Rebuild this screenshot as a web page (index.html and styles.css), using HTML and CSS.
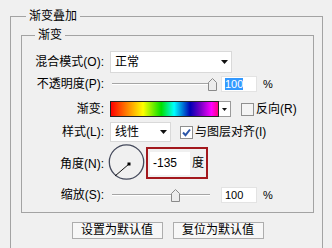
FILE: index.html
```html
<!DOCTYPE html>
<html lang="zh-CN">
<head>
<meta charset="utf-8">
<title>渐变叠加</title>
<link rel="stylesheet" href="styles.css">
</head>
<body>
<fieldset class="group outer">
  <legend>渐变叠加</legend>
  <fieldset class="group inner">
    <legend>渐变</legend>

    <div class="row r1">
      <span class="lbl">混合模式(O):</span>
      <div class="select mode"><span>正常</span><svg class="arrow" width="7" height="4"><polygon points="0,0 7,0 3.5,4"/></svg></div>
    </div>

    <div class="row r2">
      <span class="lbl">不透明度(P):</span>
      <div class="slider"><div class="track"></div><svg class="thumb" style="left:98px" width="9" height="13"><polygon points="0.5,12.5 0.5,4.5 4.5,0.5 8.5,4.5 8.5,12.5"/></svg></div>
      <div class="num"><span class="sel">100</span></div>
      <span class="unit">%</span>
    </div>

    <div class="row r3">
      <span class="lbl">渐变:</span>
      <div class="grad"></div>
      <div class="gbtn"><svg width="5" height="3"><polygon points="0,0 5,0 2.5,3"/></svg></div>
      <label class="check rev">
        <svg width="13" height="13"><rect x="0.5" y="0.5" width="12" height="12" class="box"/></svg>
        <span>反向(R)</span>
      </label>
    </div>

    <div class="row r4">
      <span class="lbl">样式(L):</span>
      <div class="select style"><span>线性</span><svg class="arrow" width="7" height="4"><polygon points="0,0 7,0 3.5,4"/></svg></div>
      <label class="check align">
        <svg width="13" height="13"><rect x="0.5" y="0.5" width="12" height="12" class="box on"/><path d="M3 6.5 L5.5 9.2 L10 3.5" class="tick"/></svg>
        <span>与图层对齐(I)</span>
      </label>
    </div>

    <div class="row r5">
      <span class="lbl">角度(N):</span>
      <svg class="dial" width="37" height="38">
        <circle cx="18.5" cy="19" r="17.2"/>
        <line x1="21" y1="21" x2="7" y2="33"/>
        <rect x="19.5" y="19.5" width="3" height="3"/>
      </svg>
      <div class="hilite">
        <div class="angle">-135</div>
        <span>度</span>
      </div>
    </div>

    <div class="row r6">
      <span class="lbl">缩放(S):</span>
      <div class="slider"><div class="track"></div><svg class="thumb" style="left:61px" width="9" height="13"><polygon points="0.5,12.5 0.5,4.5 4.5,0.5 8.5,4.5 8.5,12.5"/></svg></div>
      <div class="num">100</div>
      <span class="unit">%</span>
    </div>
  </fieldset>

  <div class="btns">
    <button class="btn">设置为默认值</button>
    <button class="btn">复位为默认值</button>
  </div>
</fieldset>
</body>
</html>
```

FILE: styles.css
```css
html,body{margin:0;overflow:hidden}
body{width:332px;height:248px;background:#f0f0f0;color:#000;font:12px/16px "Liberation Sans","Noto Sans CJK SC",sans-serif}

.group{border:1px solid #a3a3a3;margin:0;min-width:0}
.group>legend{padding:0 3px;line-height:16px}
.outer{margin:8px 9px 0 10px;padding:3px 8px 60px 10px}
.outer>legend{margin-left:5px}
.inner{padding:8px 0 9px 0}
.inner>legend{margin-left:13px}

.row{display:flex;align-items:center}
.lbl{width:82px;margin-right:6px;text-align:right;flex:none;white-space:nowrap}
.r1{height:22px}
.r2{height:16px;margin-top:3px}
.r3{height:16px;margin-top:9px}
.r4{height:20px;margin-top:5px}
.r5{height:36px;margin-top:1px;align-items:flex-start}
.r5 .lbl{margin-top:13px}
.r6{height:16px;margin-top:8px}

/* dropdowns */
.select{display:flex;align-items:center;justify-content:space-between;box-sizing:border-box;height:100%;padding:0 3px 0 4px;background:#fff;border:1px solid #d9d9d9}
.mode{width:122px}
.style{width:61px}
.arrow polygon,.gbtn polygon{fill:#111}

/* sliders */
.slider{position:relative;display:flex;align-items:center;width:102px;height:16px;flex:none}
.track{flex:1;margin:0 2px;border-top:1px solid #a5a5a5;border-bottom:1px solid #fff}
.thumb{position:absolute;top:2px}
.thumb polygon{fill:#ececec;stroke:#8a8a8a}
.num{box-sizing:border-box;width:36px;height:16px;margin-left:9px;padding-left:3px;background:#fff;border:1px solid #e3e3e3;font-size:11px;line-height:14px}
.sel{background:#3399ff;color:#fff}
.unit{margin-left:6px;font-size:11px}

/* gradient picker */
.grad{box-sizing:border-box;width:109px;height:16px;border:1px solid #222;
  background:linear-gradient(to right,#ff0000 0%,#ff8a00 16%,#ffff00 30%,#00e000 47%,#00ffff 59%,#0000b4 74%,#7a00c8 84%,#ff00ff 94%,#ff0080 100%)}
.gbtn{box-sizing:border-box;display:flex;align-items:center;justify-content:center;width:12px;height:16px;background:#fff;border:1px solid #9a9a9a;border-left:0}

/* checkboxes */
.check{display:flex;align-items:center;white-space:nowrap}
.check span{margin-left:2px}
.rev{margin-left:10px}
.align{margin-left:9px}
.box{fill:#f4f4f4;stroke:#8f8f8f}
.box.on{fill:#fff}
.tick{fill:none;stroke:#2a55a8;stroke-width:2}

/* angle */
.dial{margin-left:-2px;flex:none}
.dial circle{fill:none;stroke:#454a5c;stroke-width:1.3}
.dial line{stroke:#111;stroke-width:1}
.dial rect{fill:#000}
.hilite{display:flex;align-items:center;box-sizing:border-box;width:62px;height:32px;margin:4px 0 0 1px;padding:0 2px;border:2px solid #a3181d}
.angle{box-sizing:border-box;width:42px;height:23px;padding-left:3px;background:#fff;line-height:23px}
.hilite span{margin-left:2px}

/* buttons */
.btns{display:flex;justify-content:center;gap:10px;margin-top:9px}
.btn{box-sizing:border-box;width:91px;height:17px;padding:0;background:#f7f7f7;border:1px solid #adadad;color:#000;font:inherit;line-height:15px}
```
